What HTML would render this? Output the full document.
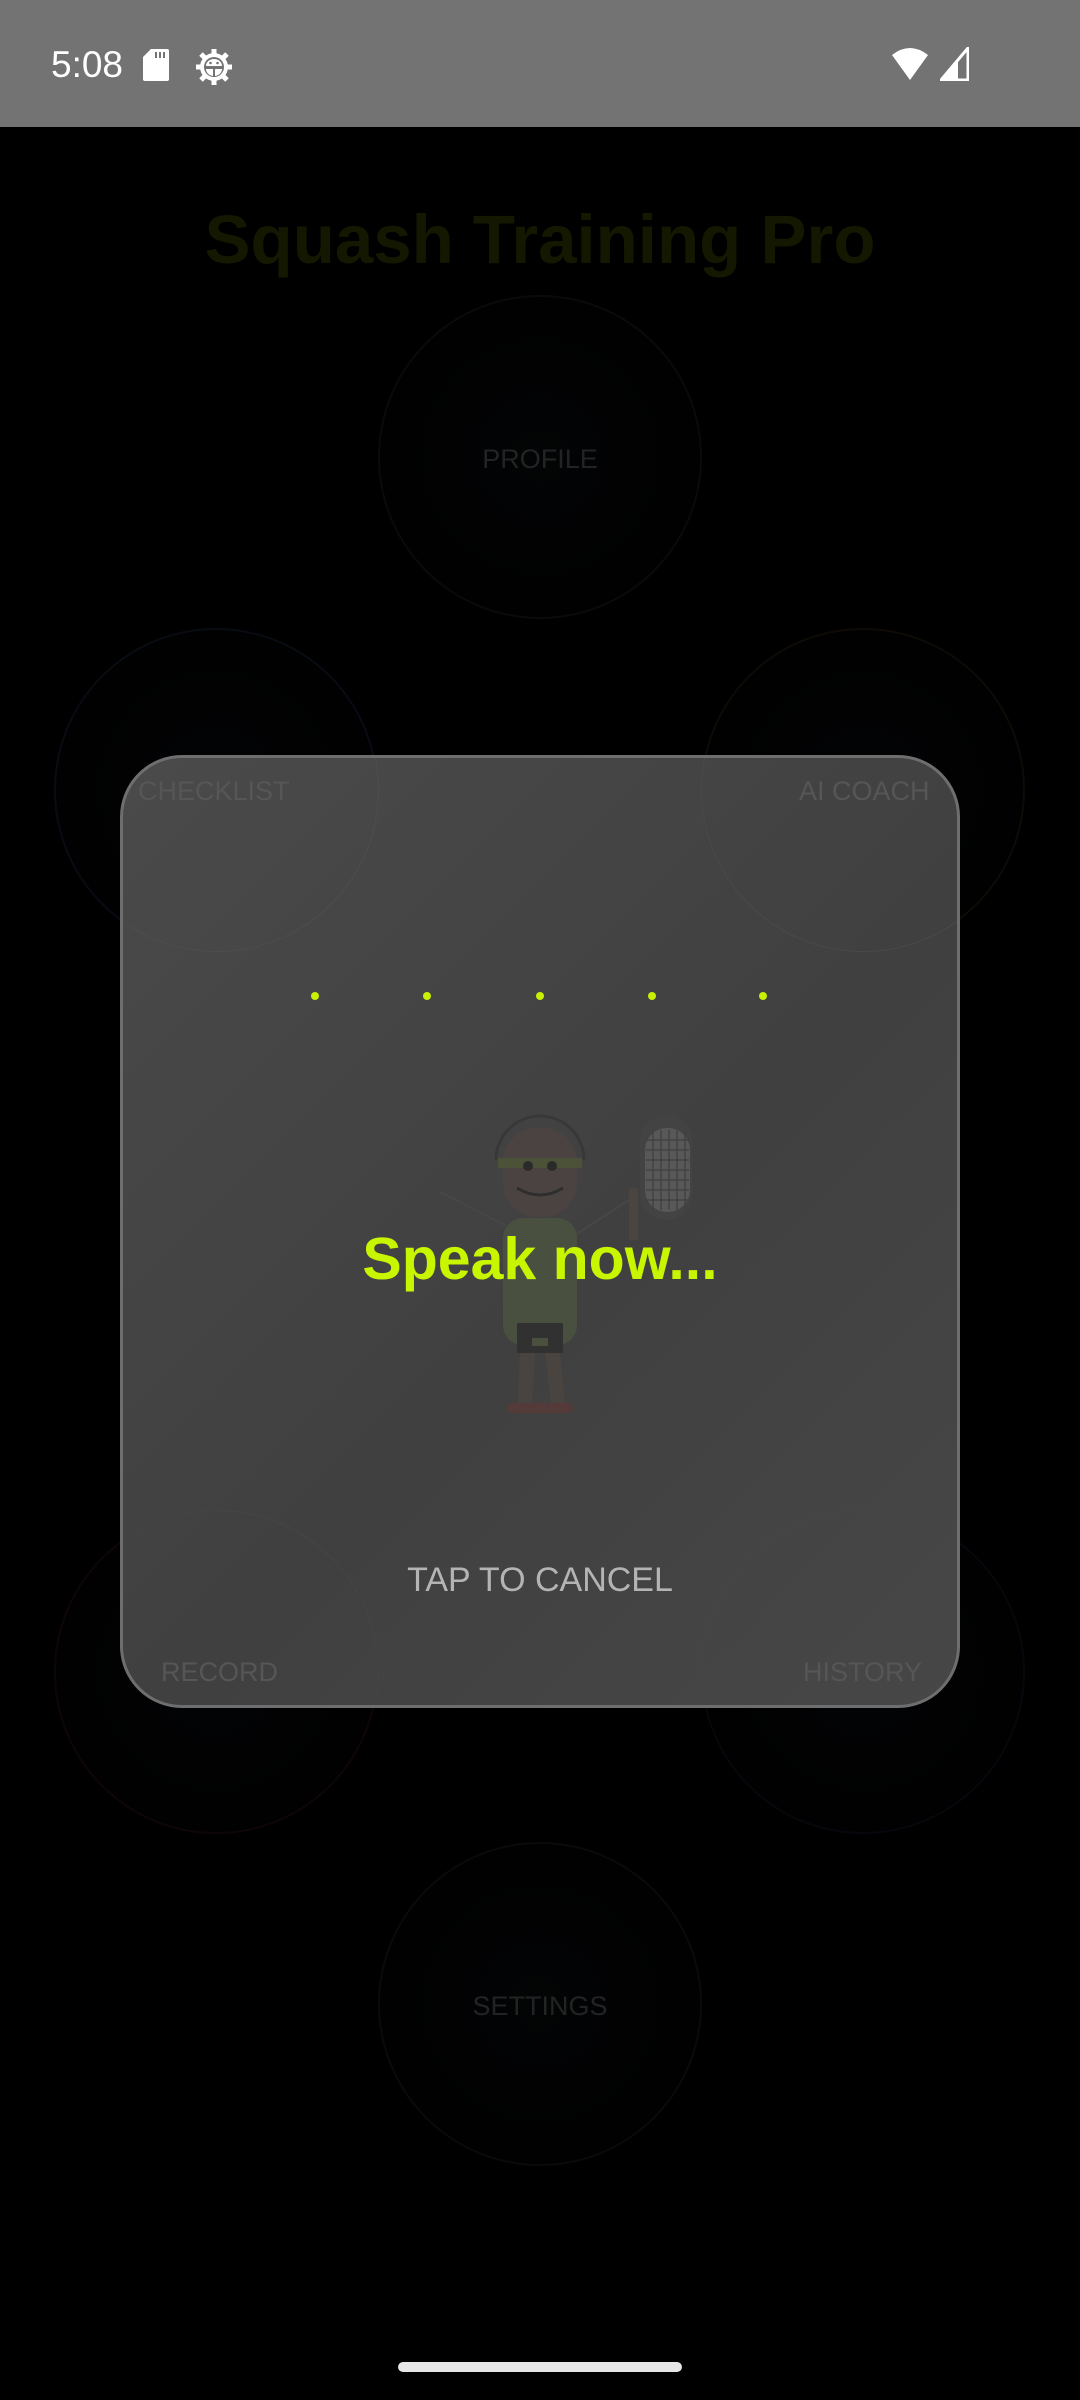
<!DOCTYPE html>
<html><head><meta charset="utf-8"><style>
*{margin:0;padding:0;box-sizing:border-box}
body{width:1080px;height:2400px;background:#000;position:relative;overflow:hidden;font-family:"Liberation Sans",Roboto,sans-serif}
.sb{position:absolute;left:0;top:0;width:1080px;height:127px;background:#737373}
.t{position:absolute;left:51px;top:44px;font-size:37px;color:#fff}
.title{position:absolute;top:200px;width:1080px;text-align:center;font-size:69px;font-weight:bold;color:#141800}
.c{position:absolute;width:324px;height:324px;border-radius:50%;border:2px solid #0a0a0c;background:radial-gradient(circle,#030405 0%,#010102 60%,#000 100%)}
.lbl{position:absolute;font-size:27px;color:#232323;width:300px;text-align:center}
.dlg{position:absolute;left:120px;top:755px;width:840px;height:953px;border-radius:62px;border:3px solid #6e6e6e;background:linear-gradient(135deg,#4a4a4a 0%,#404040 55%,#474747 100%);overflow:hidden}
.dl{position:absolute;font-size:27px;color:#565656}
.dot{position:absolute;width:8px;height:8px;border-radius:50%;background:#c8f000;top:992px}
.speak{position:absolute;top:1225px;width:1080px;text-align:center;font-size:59px;font-weight:bold;color:#c8f500}
.cancel{position:absolute;top:1561px;width:1080px;text-align:center;font-size:34px;color:#b4b4b4}
.home{position:absolute;left:398px;top:2362px;width:284px;height:10px;border-radius:5px;background:#e6e6e6}
</style></head><body>
<div class="sb"></div>
<div class="t">5:08</div>
<svg style="position:absolute;left:143px;top:49px" width="26" height="32" viewBox="0 0 26 32"><path d="M8 0H24a2 2 0 0 1 2 2V30a2 2 0 0 1-2 2H2a2 2 0 0 1-2-2V8Z" fill="#fff"/><rect x="12" y="3" width="2" height="6" fill="#737373"/><rect x="16" y="3" width="2" height="6" fill="#737373"/><rect x="20" y="3" width="2" height="6" fill="#737373"/></svg>
<svg style="position:absolute;left:195px;top:48px" width="38" height="38" viewBox="0 0 38 38"><g fill="#fff"><circle cx="19" cy="19" r="14"/><g stroke="#fff" stroke-width="5"><line x1="19" y1="1" x2="19" y2="37"/><line x1="1" y1="19" x2="37" y2="19"/><line x1="6" y1="6" x2="32" y2="32"/><line x1="32" y1="6" x2="6" y2="32"/></g></g><circle cx="19" cy="19" r="10" fill="#737373"/><path d="M11 18a8 7 0 0 1 16 0Z" fill="#fff"/><path d="M11 21h16a8 7 0 0 1-16 0Z" fill="#fff"/><rect x="18" y="21" width="2" height="8" fill="#737373"/><circle cx="15.5" cy="15" r="1.3" fill="#737373"/><circle cx="22.5" cy="15" r="1.3" fill="#737373"/></svg>
<svg style="position:absolute;left:890px;top:47px" width="40" height="34" viewBox="0 0 40 34"><path d="M20 33L2 8Q20 -6 38 8Z" fill="#fff"/></svg>
<svg style="position:absolute;left:940px;top:47px" width="29" height="34" viewBox="0 0 29 34"><path d="M28 1V33H1Z" fill="none" stroke="#fff" stroke-width="3"/><path d="M18 14V33H2Z" fill="#fff"/></svg>

<div class="title">Squash Training Pro</div>
<div class="c" style="left:378px;top:295px"></div><div class="lbl" style="left:390px;top:444px">PROFILE</div>
<div class="c" style="left:54px;top:628px;border-color:#080c12"></div><div class="lbl" style="left:66px;top:777px">CHECKLIST</div>
<div class="c" style="left:701px;top:628px;border-color:#0e0b06"></div><div class="lbl" style="left:713px;top:777px">AI COACH</div>
<div class="c" style="left:54px;top:1510px;border-color:#0e0606"></div><div class="lbl" style="left:66px;top:1659px">RECORD</div>
<div class="c" style="left:701px;top:1510px;border-color:#08060c"></div><div class="lbl" style="left:713px;top:1659px">HISTORY</div>
<div class="c" style="left:378px;top:1842px"></div><div class="lbl" style="left:390px;top:1991px">SETTINGS</div>

<div class="dlg">
<div style="position:absolute;left:-68px;top:-130px;width:324px;height:324px;border-radius:50%;border:1px solid #4c4d50"></div>
<div style="position:absolute;left:578px;top:-130px;width:324px;height:324px;border-radius:50%;border:1px solid #4b4948"></div>
<div style="position:absolute;left:-68px;top:752px;width:324px;height:324px;border-radius:50%;border:1px solid #484444"></div>
<div style="position:absolute;left:578px;top:752px;width:324px;height:324px;border-radius:50%;border:1px solid #464548"></div>
<div class="dl" style="left:15px;top:18px">CHECKLIST</div>
<div class="dl" style="left:676px;top:18px">AI COACH</div>
<div class="dl" style="left:38px;top:899px">RECORD</div>
<div class="dl" style="left:680px;top:899px">HISTORY</div>
</div>

<svg style="position:absolute;left:440px;top:1080px" width="260" height="350" viewBox="440 1080 260 350">
<line x1="440" y1="1192" x2="505" y2="1225" stroke="#474747" stroke-width="2"/>
<line x1="575" y1="1235" x2="632" y2="1198" stroke="#474747" stroke-width="2"/>
<rect x="629" y="1188" width="9" height="52" fill="#4a4540"/>
<rect x="640" y="1115" width="52" height="105" rx="26" fill="#434343"/>
<rect x="645" y="1128" width="45" height="84" rx="22" fill="#585858"/>
<g stroke="#3f3f3f" stroke-width="1.2"><line x1="653" y1="1130" x2="653" y2="1210"/><line x1="661" y1="1130" x2="661" y2="1210"/><line x1="669" y1="1130" x2="669" y2="1210"/><line x1="677" y1="1130" x2="677" y2="1210"/><line x1="685" y1="1130" x2="685" y2="1210"/>
<line x1="646" y1="1140" x2="689" y2="1140"/><line x1="646" y1="1150" x2="689" y2="1150"/><line x1="646" y1="1160" x2="689" y2="1160"/><line x1="646" y1="1170" x2="689" y2="1170"/><line x1="646" y1="1180" x2="689" y2="1180"/><line x1="646" y1="1190" x2="689" y2="1190"/><line x1="646" y1="1200" x2="689" y2="1200"/></g>
<path d="M496 1160a44 44 0 0 1 88 0" fill="none" stroke="#383838" stroke-width="3"/>
<rect x="503" y="1128" width="74" height="89" rx="34" fill="#4b4341"/>
<rect x="498" y="1158" width="84" height="10" fill="#4c5238"/>
<circle cx="528" cy="1166" r="5" fill="#2a2a2a"/><circle cx="552" cy="1166" r="5" fill="#2a2a2a"/>
<path d="M517 1188Q540 1202 563 1188" fill="none" stroke="#2e2e2e" stroke-width="3"/>
<rect x="503" y="1218" width="74" height="127" rx="20" fill="#4a5040"/>
<rect x="517" y="1323" width="46" height="30" fill="#313131"/>
<rect x="532" y="1338" width="16" height="8" fill="#4a5040"/>
<path d="M520 1353h15l-3 50h-14Z" fill="#4a4440"/><path d="M545 1353h15l5 50h-14Z" fill="#4a4440"/>
<rect x="507" y="1403" width="66" height="10" rx="5" fill="#553a3a"/>
</svg>

<div class="dot" style="left:311px"></div>
<div class="dot" style="left:423px"></div>
<div class="dot" style="left:536px"></div>
<div class="dot" style="left:648px"></div>
<div class="dot" style="left:759px"></div>
<div class="speak">Speak now...</div>
<div class="cancel">TAP TO CANCEL</div>
<div class="home"></div>
</body></html>
